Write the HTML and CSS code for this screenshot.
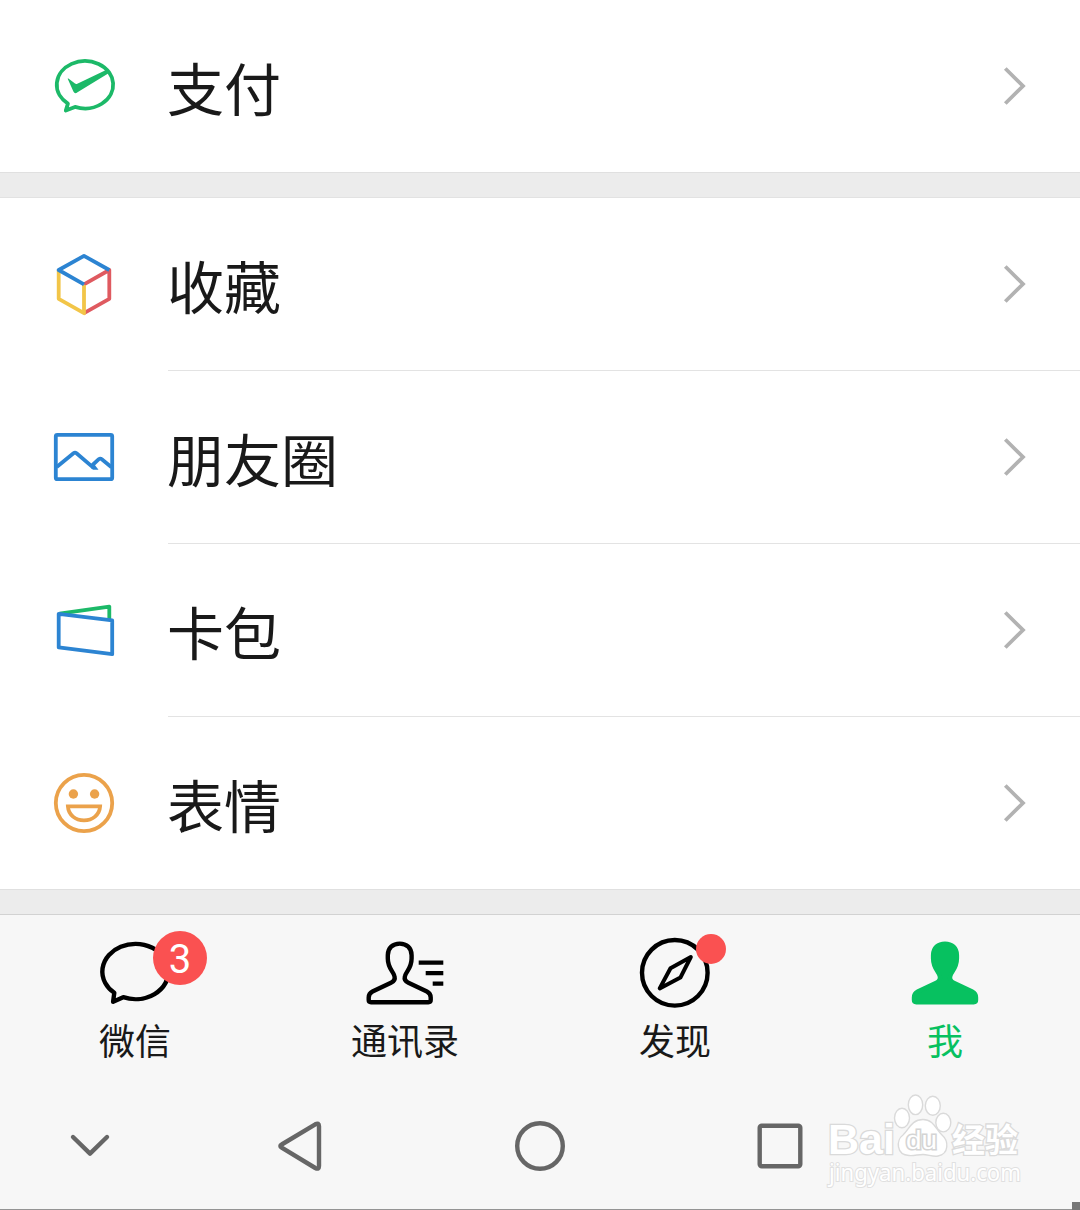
FILE: index.html
```html
<!DOCTYPE html>
<html lang="zh-CN">
<head>
<meta charset="utf-8">
<title>我</title>
<link rel="stylesheet" href="styles.css">
</head>
<body>
<main class="screen">
  <section class="group">
    <a class="row">
      <svg class="icon green" viewBox="0 0 72 72"><path d="M27 56.9A28.2 23.7 0 1 0 19.9 53.6L17.8 60.6Z"/><path class="solid" d="M19.7 28.8Q19.5 28.2 20.4 28.6L27 33.6Q28 34.2 29.3 33.7L59.6 19.3L61.4 22.8L29.5 42.2Q27 44.6 25.4 41.6Z"/></svg>
      <span class="label">支付</span>
      <svg class="chevron" viewBox="0 0 26 42"><path d="M4.3 3.5L22 21L4.3 38.5"/></svg>
    </a>
  </section>
  <section class="group">
    <a class="row">
      <svg class="icon" viewBox="0 0 72 72"><path class="red" d="M36 36.4L61.3 22V50.8L36 65.2"/><path class="yellow" d="M10.7 22V50.8L36 65.2V37"/><path class="blue" d="M61.3 22L36 7.8L10.7 22L36 36.4"/></svg>
      <span class="label">收藏</span>
      <svg class="chevron" viewBox="0 0 26 42"><path d="M4.3 3.5L22 21L4.3 38.5"/></svg>
    </a>
    <a class="row">
      <svg class="icon blue" viewBox="0 0 72 72"><rect x="7.8" y="13.8" width="56.4" height="44.4" rx="1.5"/><path d="M8.7 46L25.5 32.2Q27 31 28.5 32.2L45.3 46.6M43.5 45L50.8 38.2Q52.3 37 53.8 38.2L63.5 46.3"/><path class="solid" d="M43 47L46.5 43.6L50.5 48.7H45Z"/></svg>
      <span class="label">朋友圈</span>
      <svg class="chevron" viewBox="0 0 26 42"><path d="M4.3 3.5L22 21L4.3 38.5"/></svg>
    </a>
    <a class="row">
      <svg class="icon" viewBox="0 0 72 72"><path class="green" d="M11.5 19.6L61.3 12.6V25"/><path class="blue" d="M10.7 19.8L64.2 26.4V60.2L10.7 53.4Z"/></svg>
      <span class="label">卡包</span>
      <svg class="chevron" viewBox="0 0 26 42"><path d="M4.3 3.5L22 21L4.3 38.5"/></svg>
    </a>
    <a class="row">
      <svg class="icon orange" viewBox="0 0 72 72"><circle cx="36" cy="36" r="28.2"/><circle class="solid" cx="25.4" cy="27" r="4.7"/><circle class="solid" cx="46.6" cy="27" r="4.7"/><path class="mitre" d="M19.9 39.4H52.1C51.5 48 44.5 53.4 36 53.4S20.5 48 19.9 39.4Z"/></svg>
      <span class="label">表情</span>
      <svg class="chevron" viewBox="0 0 26 42"><path d="M4.3 3.5L22 21L4.3 38.5"/></svg>
    </a>
  </section>
  <nav class="tabs">
    <a class="tab">
      <svg class="tab-icon" viewBox="0 0 80 80"><path d="M28.2 65.2A33.1 27.6 0 1 0 19.3 60.8L18.1 69.8Z"/></svg>
      <span>微信</span><b class="badge">3</b>
    </a>
    <a class="tab">
      <svg class="tab-icon" viewBox="0 0 80 80"><path d="M6 70.2Q3.7 70.2 3.7 68V65.5Q3.7 61.4 7.5 59.5L26 50.7Q30.6 48.6 29.5 44.2C28.5 39.5 22.8 36.5 22.8 26.5V23.2C22.8 16 27.8 11.6 34.7 11.6S46.6 16 46.6 23.2V26.5C46.6 36.5 40.9 39.5 39.9 44.2Q38.8 48.6 43.4 50.7L61.9 59.5Q65.7 61.4 65.7 65.5V68Q65.7 70.2 63.4 70.2Z"/><path class="butt" d="M53.7 30.7H78.3M60.7 41.2H78.3M67.7 51.7H78.3"/></svg>
      <span>通讯录</span>
    </a>
    <a class="tab">
      <svg class="tab-icon" viewBox="0 0 80 80"><circle cx="39.8" cy="40.8" r="32.8"/><path class="needle" d="M55.8 25L45.4 45.6L24.7 56.4L35.5 36.2Z"/></svg>
      <span>发现</span><i class="dot"></i>
    </a>
    <a class="tab active">
      <svg class="tab-icon" viewBox="0 0 80 80"><path transform="translate(5.3 0)" d="M6 70.2Q3.7 70.2 3.7 68V65.5Q3.7 61.4 7.5 59.5L26 50.7Q30.6 48.6 29.5 44.2C28.5 39.5 22.8 36.5 22.8 26.5V23.2C22.8 16 27.8 11.6 34.7 11.6S46.6 16 46.6 23.2V26.5C46.6 36.5 40.9 39.5 39.9 44.2Q38.8 48.6 43.4 50.7L61.9 59.5Q65.7 61.4 65.7 65.5V68Q65.7 70.2 63.4 70.2Z"/></svg>
      <span>我</span>
    </a>
  </nav>
  <footer class="system-bar">
    <svg viewBox="0 0 60 60"><path d="M13 21L30 37.6L47 21"/></svg>
    <svg viewBox="0 0 60 60"><path d="M11.7 28.5Q9 30 11.7 31.7L45.3 52Q49 54 49 50V10.3Q49 6.3 45.3 8.3Z"/></svg>
    <svg viewBox="0 0 60 60"><circle cx="30" cy="30" r="22.8"/></svg>
    <svg viewBox="0 0 60 60"><rect x="9.7" y="9.7" width="40.6" height="40.6" rx="2"/></svg>
  </footer>
  <svg class="watermark" viewBox="820 1085 210 110">
    <text class="wm-logo" x="828" y="1154" font-size="43" textLength="67" lengthAdjust="spacingAndGlyphs">Bai</text>
    <ellipse cx="902" cy="1118" rx="7.5" ry="9.7"/><ellipse cx="915.5" cy="1104.8" rx="7.2" ry="9.8"/><ellipse cx="932.8" cy="1105.8" rx="7.5" ry="9.5"/><ellipse cx="943.3" cy="1122.6" rx="7.5" ry="9.3"/>
    <path d="M923 1119.5C911 1119.5 909 1130 903 1135C896 1140 896 1155 909 1155.5C914 1156 918 1154.5 923 1154.5S933 1157 938 1156C949 1154 949 1141 942 1135C936 1130 934 1119.5 923 1119.5Z"/>
    <text class="wm-du" x="906" y="1149" font-size="25" textLength="31" lengthAdjust="spacingAndGlyphs">du</text>
    <text class="wm-cjk" x="952" y="1152" font-size="33">经验</text>
    <text class="wm-url" x="829" y="1181" font-size="23" textLength="192" lengthAdjust="spacingAndGlyphs">jingyan.baidu.com</text>
  </svg>
  <i class="corner"></i>
</main>
</body>
</html>
```
FILE: styles.css
```css
* { box-sizing: border-box; }
body { margin: 0; }
.screen {
  position: relative;
  width: 1080px;
  height: 1210px;
  overflow: hidden;
  background: #ececec;
  color: #191919;
  font-family: "Noto Sans CJK SC", sans-serif;
}
svg { display: block; flex: none; fill: none; stroke: currentColor; }

.group { background: #fff; border-bottom: 1px solid #e0e0e0; }
.group + .group { margin-top: 24px; border-top: 1px solid #e2e2e2; }
.row {
  position: relative;
  display: flex;
  align-items: center;
  height: 173px;
  padding: 0 53px 1px 48px;
}
.group:first-child .row { height: 172px; padding-bottom: 0; }
.group:nth-child(2) .row:last-child { height: 172px; padding-bottom: 0; }
.row:not(:last-child)::after {
  content: "";
  position: absolute;
  left: 168px;
  right: 0;
  bottom: 0;
  height: 1px;
  background: #e3e3e3;
}
.icon { width: 72px; height: 72px; stroke-width: 3.8; stroke-linejoin: round; }
.green { color: #1cb968; stroke: #1cb968; }
.blue { color: #2c84d2; stroke: #2c84d2; }
.yellow { stroke: #f2c548; }
.red { stroke: #df5a60; }
.orange { color: #eba24b; stroke: #eba24b; }
.solid { fill: currentColor; stroke: none; }
.mitre { stroke-linejoin: miter; }
.label { flex: 1; margin-left: 47px; font-size: 57px; line-height: 80px; }
.chevron { width: 26px; height: 42px; color: #b2b2b2; stroke-width: 3.8; }

.tabs {
  display: grid;
  grid-template-columns: repeat(4, 1fr);
  height: 167px;
  margin-top: 24px;
  border-top: 1px solid #d2d2d2;
  background: #f7f7f7;
}
.tab {
  position: relative;
  display: flex;
  flex-direction: column;
  align-items: center;
  padding-top: 17px;
  font-size: 36px;
  line-height: 52px;
}
.tab-icon { width: 80px; height: 80px; margin-bottom: 1px; color: #000; stroke-width: 4.4; stroke-linejoin: round; }
.butt { stroke-width: 4.2; }
.needle { stroke-width: 4; }
.active, .active .tab-icon { color: #07c160; }
.active path { fill: currentColor; }
.badge {
  position: absolute;
  left: 153px;
  top: 16px;
  width: 54px;
  height: 54px;
  border-radius: 50%;
  background: #fa5151;
  color: #fff;
  font: 400 40px/58px Roboto, sans-serif;
  text-align: center;
}
.dot {
  position: absolute;
  left: 156px;
  top: 19px;
  width: 30px;
  height: 30px;
  border-radius: 50%;
  background: #fa5151;
}

.system-bar {
  display: flex;
  gap: 180px;
  height: 129px;
  padding: 35px 60px 0;
  border-bottom: 1px solid #949494;
  background: #f7f7f7;
  color: #666;
}
.system-bar svg { width: 60px; height: 60px; stroke-width: 4.4; stroke-linecap: round; stroke-linejoin: round; }
.system-bar svg:first-child { margin-right: -30px; }

.watermark {
  position: absolute;
  left: 820px;
  top: 1085px;
  width: 210px;
  height: 110px;
  fill: #fff;
  stroke: #dadada;
  stroke-width: 1.4;
}
.watermark text { paint-order: stroke; stroke-width: 2.6; }
.wm-logo, .wm-du { font-family: "Liberation Sans", sans-serif; font-weight: 700; }
.watermark .wm-du { font-weight: 400; stroke-width: 3; stroke: #d4d4d4; }
.wm-cjk { font-family: "Noto Sans CJK SC", sans-serif; font-weight: 700; }
.watermark .wm-url { font-family: "Noto Sans", sans-serif; stroke: #e0e0e0; stroke-width: 2; }
.corner { position: absolute; right: 0; bottom: 0; width: 8px; height: 8px; background: #777; }
```
